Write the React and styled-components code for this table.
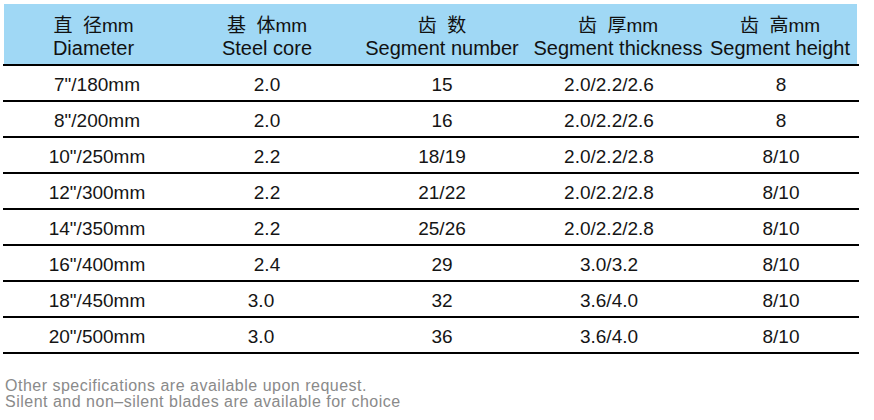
import React from "react";
import styled, { createGlobalStyle } from "styled-components";

const GlobalStyle = createGlobalStyle`
  html, body { margin: 0; padding: 0; background: #ffffff; }
  body { font-family: "Liberation Sans", "Noto Sans CJK SC", Arial, sans-serif; }
`;

const Page = styled.div`
  width: 874px;
  height: 420px;
  box-sizing: border-box;
  padding: 4px 0 0 3px;
  overflow: hidden;
`;

const Table = styled.div`
  width: 856px;
`;

const HeaderWrap = styled.div`
  border-bottom: 2px solid #000;
`;

const HeaderBand = styled.div`
  display: grid;
  grid-template-columns: 179px 168px 182px 170px 154px;
  margin: 0 2px 0 1px;
  height: 60px;
  box-sizing: border-box;
  padding-top: 10px;
  background: #a0d8f5;
`;

const HeadCell = styled.div`
  text-align: center;
  line-height: 23px;
  color: #111;
  white-space: pre;
`;

const HeadLine = styled.div`
  font-size: ${(p) => (p.$cjk ? 19 : 20)}px;
  font-family: ${(p) =>
    p.$cjk
      ? `"Liberation Sans", "Noto Sans CJK SC", sans-serif`
      : `"Liberation Sans", Arial, sans-serif`};
`;

const Row = styled.div`
  display: grid;
  grid-template-columns: 180px 168px 182px 170px 156px;
  height: 36px;
  box-sizing: border-box;
  border-bottom: 2px solid #000;
  padding-top: 3px;
  align-items: center;
`;

const Cell = styled.div`
  text-align: center;
  font-size: 19px;
  color: #151515;
  transform: translateX(${(p) => p.$dx || 0}px);
`;

const Footer = styled.div`
  margin: 24px 0 0 2px;
  font-size: 16px;
  line-height: 16px;
  letter-spacing: 0.5px;
  color: #8a8a8a;
`;

const FootLine = styled.div`
  white-space: nowrap;
`;

const headers = [
  ["直  径mm", "Diameter"],
  ["基  体mm", "Steel core"],
  ["齿  数", "Segment number"],
  ["齿  厚mm", "Segment thickness"],
  ["齿  高mm", "Segment height"],
];

const rows = [
  ["7\"/180mm", "2.0", "15", "2.0/2.2/2.6", "8"],
  ["8\"/200mm", "2.0", "16", "2.0/2.2/2.6", "8"],
  ["10\"/250mm", "2.2", "18/19", "2.0/2.2/2.8", "8/10"],
  ["12\"/300mm", "2.2", "21/22", "2.0/2.2/2.8", "8/10"],
  ["14\"/350mm", "2.2", "25/26", "2.0/2.2/2.8", "8/10"],
  ["16\"/400mm", "2.4", "29", "3.0/3.2", "8/10"],
  ["18\"/450mm", "3.0", "32", "3.6/4.0", "8/10"],
  ["20\"/500mm", "3.0", "36", "3.6/4.0", "8/10"],
];

const colShift = [4, 0, 0, -9, 0];

export default function App() {
  return (
    <>
      <GlobalStyle />
      <Page>
        <Table>
          <HeaderWrap>
            <HeaderBand>
              {headers.map(([zh, en], i) => (
                <HeadCell key={i}>
                  <HeadLine $cjk>{zh}</HeadLine>
                  <HeadLine>{en}</HeadLine>
                </HeadCell>
              ))}
            </HeaderBand>
          </HeaderWrap>
          {rows.map((r, ri) => (
            <Row key={ri}>
              {r.map((v, ci) => (
                <Cell
                  key={ci}
                  $dx={colShift[ci] + (ci === 1 && ri >= 6 ? -6 : 0)}
                >
                  {v}
                </Cell>
              ))}
            </Row>
          ))}
        </Table>
        <Footer>
          <FootLine>Other specifications are available upon request.</FootLine>
          <FootLine>Silent and non–silent blades are available for choice</FootLine>
        </Footer>
      </Page>
    </>
  );
}
